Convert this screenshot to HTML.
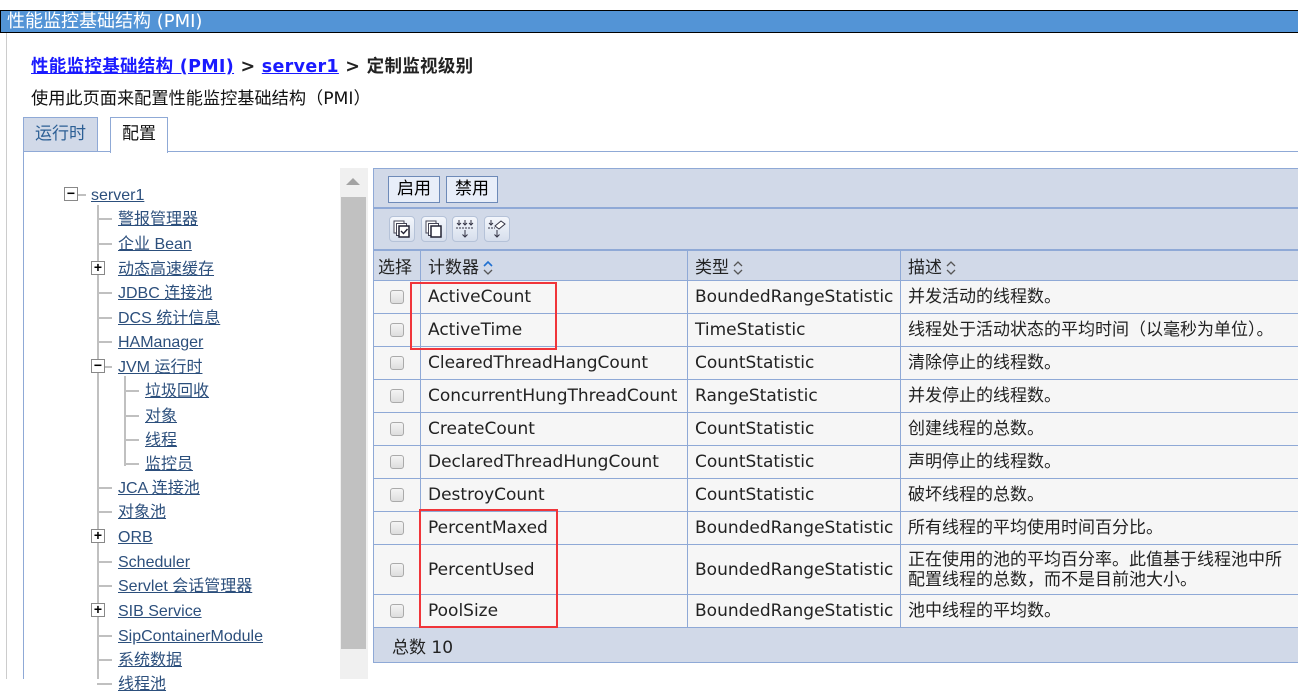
<!DOCTYPE html>
<html><head><meta charset="utf-8"><style>
*{margin:0;padding:0;box-sizing:border-box}
body{width:1298px;height:679px;overflow:hidden;background:#fff;position:relative;font-family:"Liberation Sans","Noto Sans CJK SC",sans-serif}
.a{position:absolute}
.title{left:0;top:10px;width:1298px;height:23px;background:#5394d6;border:1px solid #000;border-right:none;color:#fff;font-size:18px;line-height:21px;padding-left:6px;font-family:"DejaVu Sans","Noto Sans CJK SC",sans-serif}
.crumb{left:31px;top:56px;font-size:17.5px;line-height:22px;font-weight:bold;font-family:"DejaVu Sans","Noto Sans CJK SC",sans-serif;color:#222;white-space:nowrap;letter-spacing:0.3px}
.crumb u{color:#1a1aff}
.desc{left:31px;top:88px;font-size:17.2px;line-height:22px;color:#111;font-family:"DejaVu Sans","Noto Sans CJK SC",sans-serif;white-space:nowrap}
.tab{top:117px;height:35px;border:1px solid #8fa9d6;border-bottom:none;font-size:17px;line-height:32px;text-align:center;font-family:"DejaVu Sans","Noto Sans CJK SC",sans-serif}
.tree{font-size:16px;line-height:18px;color:#2c4f7c;text-decoration:underline;white-space:nowrap}
.ln{background:#c0c0c0}
.box{width:14px;height:14px;border:1px solid #888;background:#fff;font-size:14px;line-height:11px;text-align:center;color:#000;font-weight:bold}
table{border-collapse:collapse;table-layout:fixed;font-family:"DejaVu Sans","Noto Sans CJK SC",sans-serif;font-size:17px;color:#222}
td{border:1px solid #8fa9d6;background:#f6f6f6;padding:0 7px;white-space:nowrap;height:33px;overflow:hidden;line-height:20px}
th{border:1px solid #8fa9d6;background:#d1d9e8;font-weight:normal;text-align:left;padding:0 7px;height:30px;white-space:nowrap}
.cb{width:14px;height:14px;border:1px solid #aaa;border-radius:3px;background:linear-gradient(#f4f4f4,#ddd);margin:0 auto}
.btn{top:176px;height:27px;border:1px solid #6d8ab8;background:#e8eef9;font-size:17px;line-height:24px;padding:0 8px;font-family:"DejaVu Sans","Noto Sans CJK SC",sans-serif}
.ib{top:216px;width:26px;height:26px;border:1px solid #b5c2d8;border-radius:4px;background:linear-gradient(#f4f7fc,#d6deec)}
.red{border:2px solid #f0353a}
.srt{display:inline-block;vertical-align:middle;margin-left:4px}
</style></head><body>
<div class="a title">性能监控基础结构 (PMI)</div>
<div class="a" style="left:6px;top:33px;width:1px;height:646px;background:#ccc"></div>
<div class="a crumb"><u>性能监控基础结构 (PMI)</u> &gt; <u>server1</u> &gt; 定制监视级别</div>
<div class="a desc">使用此页面来配置性能监控基础结构（PMI）</div>
<div class="a tab" style="left:23px;width:75px;background:#d1d9e8;color:#2c5f95">运行时</div>
<div class="a tab" style="left:110px;width:58px;background:#fff;height:36px;color:#111">配置</div>
<div class="a" style="left:23px;top:151px;width:87px;height:1px;background:#8fa9d6"></div>
<div class="a" style="left:167px;top:151px;width:1131px;height:1px;background:#8fa9d6"></div>
<div class="a" style="left:23px;top:151px;width:1px;height:528px;background:#8fa9d6"></div>

<div class="a ln" style="left:97px;top:205px;width:2px;height:474px"></div>
<div class="a ln" style="left:124px;top:376px;width:2px;height:90px"></div>
<div class="a ln" style="left:78px;top:194px;width:8px;height:2px"></div>
<div class="a box" style="left:64px;top:187px">−</div>
<div class="a tree" style="left:91px;top:187px">server1</div>
<div class="a ln" style="left:97px;top:218px;width:15px;height:2px"></div><div class="a tree" style="left:118px;top:211px">警报管理器</div>
<div class="a ln" style="left:97px;top:243px;width:15px;height:2px"></div><div class="a tree" style="left:118px;top:236px">企业 Bean</div>
<div class="a box" style="left:91px;top:261px">+</div><div class="a tree" style="left:118px;top:261px">动态高速缓存</div>
<div class="a ln" style="left:97px;top:292px;width:15px;height:2px"></div><div class="a tree" style="left:118px;top:285px">JDBC 连接池</div>
<div class="a ln" style="left:97px;top:317px;width:15px;height:2px"></div><div class="a tree" style="left:118px;top:310px">DCS 统计信息</div>
<div class="a ln" style="left:97px;top:341px;width:15px;height:2px"></div><div class="a tree" style="left:118px;top:334px">HAManager</div>
<div class="a box" style="left:91px;top:359px">−</div><div class="a ln" style="left:105px;top:366px;width:7px;height:2px"></div><div class="a tree" style="left:118px;top:359px">JVM 运行时</div>
<div class="a ln" style="left:124px;top:390px;width:15px;height:2px"></div><div class="a tree" style="left:145px;top:383px">垃圾回收</div>
<div class="a ln" style="left:124px;top:415px;width:15px;height:2px"></div><div class="a tree" style="left:145px;top:408px">对象</div>
<div class="a ln" style="left:124px;top:439px;width:15px;height:2px"></div><div class="a tree" style="left:145px;top:432px">线程</div>
<div class="a ln" style="left:124px;top:463px;width:15px;height:2px"></div><div class="a tree" style="left:145px;top:456px">监控员</div>
<div class="a ln" style="left:97px;top:487px;width:15px;height:2px"></div><div class="a tree" style="left:118px;top:480px">JCA 连接池</div>
<div class="a ln" style="left:97px;top:511px;width:15px;height:2px"></div><div class="a tree" style="left:118px;top:504px">对象池</div>
<div class="a box" style="left:91px;top:529px">+</div><div class="a tree" style="left:118px;top:529px">ORB</div>
<div class="a ln" style="left:97px;top:561px;width:15px;height:2px"></div><div class="a tree" style="left:118px;top:554px">Scheduler</div>
<div class="a ln" style="left:97px;top:585px;width:15px;height:2px"></div><div class="a tree" style="left:118px;top:578px">Servlet 会话管理器</div>
<div class="a box" style="left:91px;top:603px">+</div><div class="a tree" style="left:118px;top:603px">SIB Service</div>
<div class="a ln" style="left:97px;top:635px;width:15px;height:2px"></div><div class="a tree" style="left:118px;top:628px">SipContainerModule</div>
<div class="a ln" style="left:97px;top:659px;width:15px;height:2px"></div><div class="a tree" style="left:118px;top:652px">系统数据</div>
<div class="a ln" style="left:97px;top:683px;width:15px;height:2px"></div><div class="a tree" style="left:118px;top:676px">线程池</div>

<div class="a" style="left:340px;top:168px;width:28px;height:511px;background:#f0f0f0"></div>
<div class="a" style="left:346px;top:178px;width:0;height:0;border-left:7px solid transparent;border-right:7px solid transparent;border-bottom:7px solid #a3a3a3"></div>
<div class="a" style="left:341px;top:197px;width:25px;height:452px;background:#c1c1c1"></div>

<div class="a" style="left:373px;top:168px;width:925px;height:82px;background:#d1d9e8;border:1px solid #8fa9d6;border-right:none"></div>
<div class="a" style="left:373px;top:207px;width:925px;height:2px;background:#8fa9d6"></div>
<div class="a btn" style="left:388px">启用</div>
<div class="a btn" style="left:446px">禁用</div>
<div class="a ib" style="left:389px"><svg width="24" height="24"><rect x="4" y="4" width="10" height="12" fill="#fff" stroke="#445"/><rect x="6.5" y="6.5" width="10" height="12" fill="#fff" stroke="#445"/><rect x="9" y="9" width="10" height="11" fill="#fff" stroke="#223" stroke-width="1.5"/><path d="M11 14l2.5 2.5 4-4.5" stroke="#223" fill="none" stroke-width="1.4"/></svg></div>
<div class="a ib" style="left:421px"><svg width="24" height="24"><rect x="4" y="4" width="10" height="12" fill="#fff" stroke="#445"/><rect x="6.5" y="6.5" width="10" height="12" fill="#fff" stroke="#445"/><rect x="9" y="9" width="10" height="11" fill="#fff" stroke="#223" stroke-width="1.5"/></svg></div>
<div class="a ib" style="left:452px"><svg width="24" height="24" stroke="#334" fill="none"><path d="M6 3v5M4 6l2 2 2-2M12 3v5M10 6l2 2 2-2M18 3v5M16 6l2 2 2-2"/><path d="M3 11h18" stroke-dasharray="2 1"/><path d="M12 13v7M9.5 17.5l2.5 2.5 2.5-2.5"/></svg></div>
<div class="a ib" style="left:484px"><svg width="24" height="24" stroke="#334" fill="none"><path d="M6 3v5M4 6l2 2 2-2"/><path d="M10 9l6-5 4 3-6 5z" fill="#fff"/><path d="M3 11h7" stroke-dasharray="2 1"/><path d="M12 13v7M9.5 17.5l2.5 2.5 2.5-2.5"/></svg></div>

<table class="a" style="left:373px;top:250px;width:945px">
<colgroup><col style="width:47px"><col style="width:267px"><col style="width:213px"><col></colgroup>
<tr><th style="padding:0 4px">选择</th><th>计数器<svg class="srt" width="10" height="16"><path d="M1 6l4-4 4 4" stroke="#1f6fd0" stroke-width="1.6" fill="none"/><path d="M1 10l4 4 4-4" stroke="#555" stroke-width="1.3" fill="none"/></svg></th><th>类型<svg class="srt" width="10" height="16"><path d="M1 6l4-4 4 4M1 10l4 4 4-4" stroke="#555" stroke-width="1.3" fill="none"/></svg></th><th>描述<svg class="srt" width="10" height="16"><path d="M1 6l4-4 4 4M1 10l4 4 4-4" stroke="#555" stroke-width="1.3" fill="none"/></svg></th></tr>
<tr><td><div class="cb"></div></td><td>ActiveCount</td><td>BoundedRangeStatistic</td><td>并发活动的线程数。</td></tr>
<tr><td><div class="cb"></div></td><td>ActiveTime</td><td>TimeStatistic</td><td>线程处于活动状态的平均时间（以毫秒为单位）。</td></tr>
<tr><td><div class="cb"></div></td><td>ClearedThreadHangCount</td><td>CountStatistic</td><td>清除停止的线程数。</td></tr>
<tr><td><div class="cb"></div></td><td>ConcurrentHungThreadCount</td><td>RangeStatistic</td><td>并发停止的线程数。</td></tr>
<tr><td><div class="cb"></div></td><td>CreateCount</td><td>CountStatistic</td><td>创建线程的总数。</td></tr>
<tr><td><div class="cb"></div></td><td>DeclaredThreadHungCount</td><td>CountStatistic</td><td>声明停止的线程数。</td></tr>
<tr><td><div class="cb"></div></td><td>DestroyCount</td><td>CountStatistic</td><td>破坏线程的总数。</td></tr>
<tr><td><div class="cb"></div></td><td>PercentMaxed</td><td>BoundedRangeStatistic</td><td>所有线程的平均使用时间百分比。</td></tr>
<tr><td style="height:50px"><div class="cb"></div></td><td>PercentUsed</td><td>BoundedRangeStatistic</td><td style="line-height:20px">正在使用的池的平均百分率。此值基于线程池中所<br>配置线程的总数，而不是目前池大小。</td></tr>
<tr><td><div class="cb"></div></td><td>PoolSize</td><td>BoundedRangeStatistic</td><td>池中线程的平均数。</td></tr>
<tr><th colspan="4" style="height:35px;padding-left:18px">总数 10</th></tr>
</table>
<div class="a red" style="left:410px;top:282px;width:147px;height:68px"></div>
<div class="a red" style="left:419px;top:509px;width:139px;height:119px"></div>
</body></html>
